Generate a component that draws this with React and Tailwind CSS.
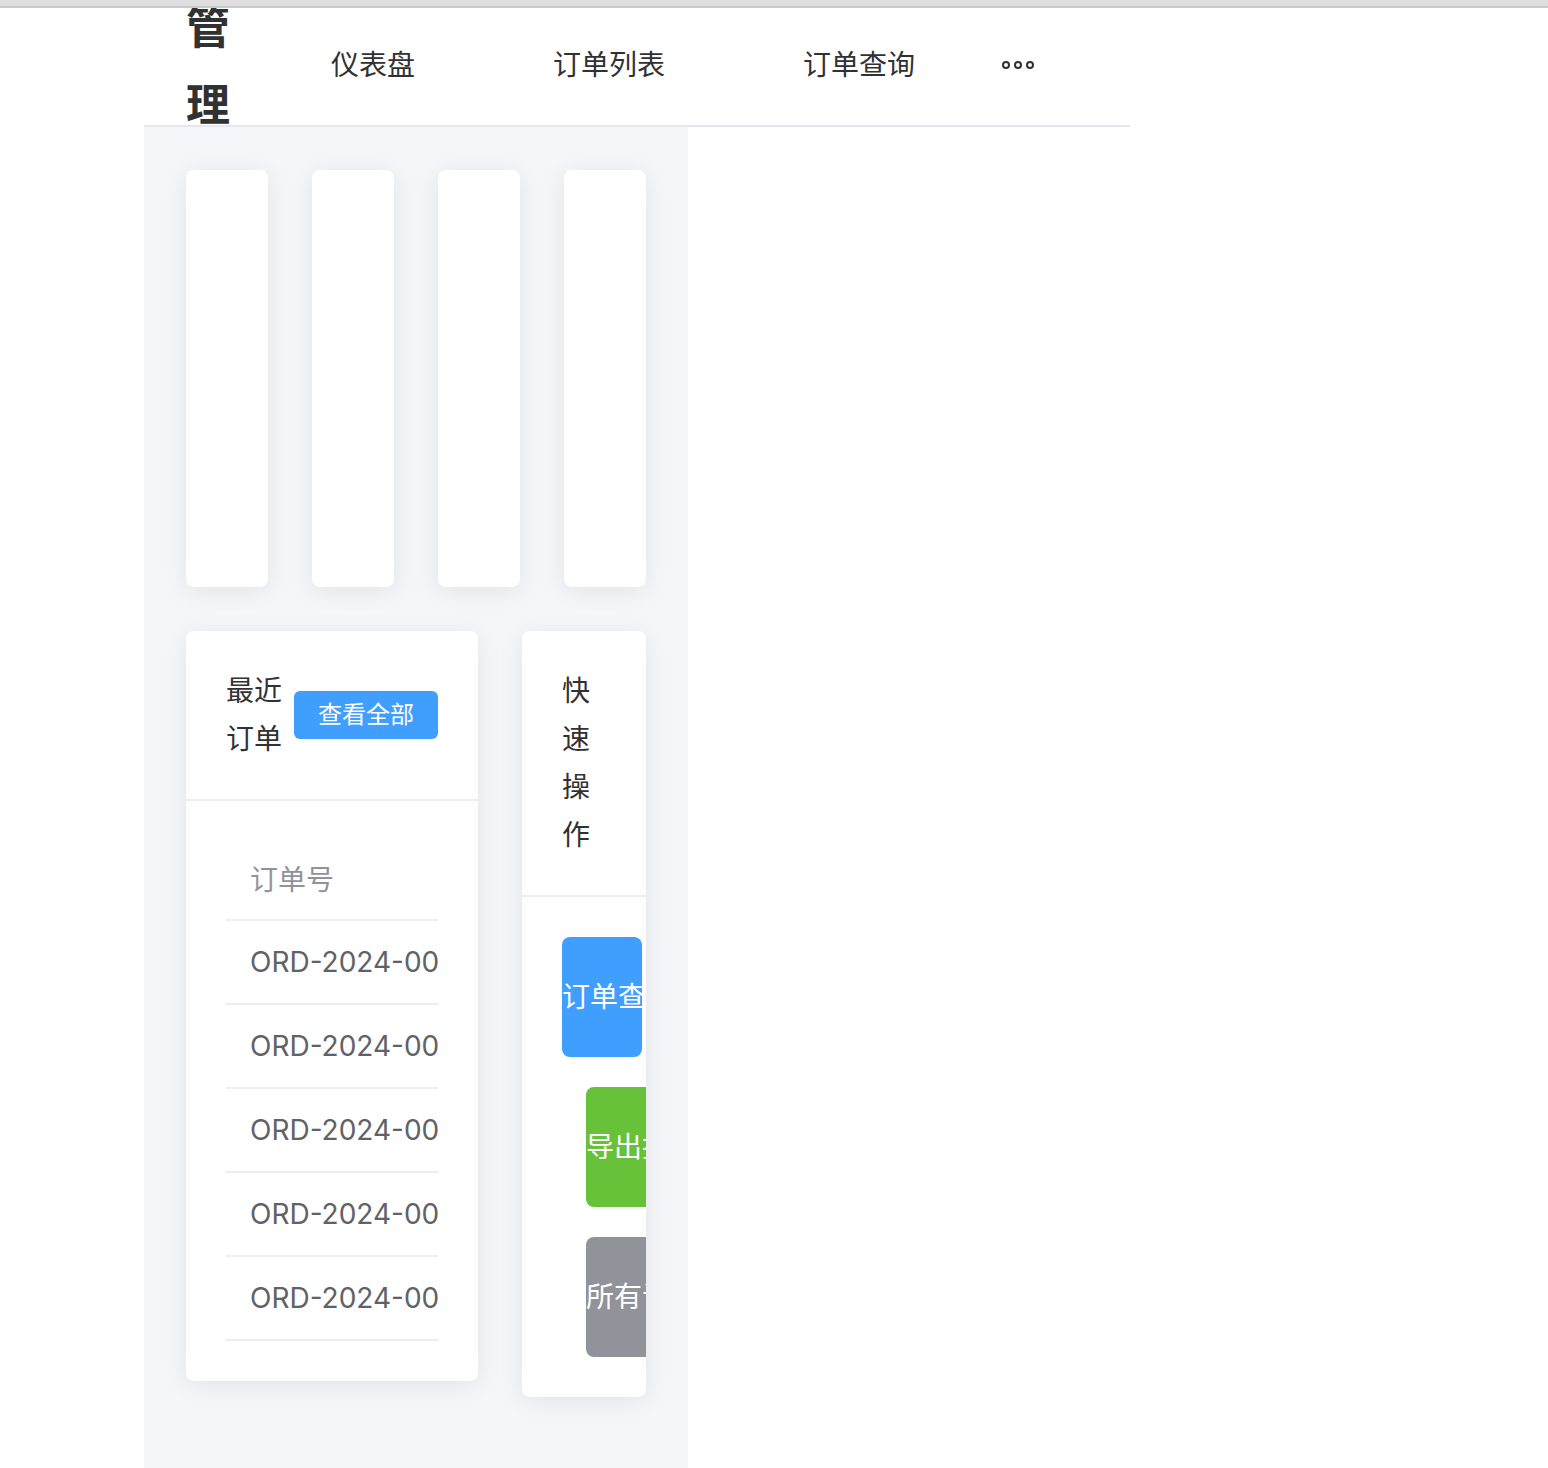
import React from "react";

const font = { fontFamily: 'Inter, "Noto Sans CJK SC", sans-serif' };

const menu = ["仪表盘", "订单列表", "订单查询"];
const orders = ["ORD-2024-001", "ORD-2024-002", "ORD-2024-003", "ORD-2024-004", "ORD-2024-005"];

function MoreDots() {
  return (
    <svg width="34" height="10" viewBox="0 0 34 10" fill="none" stroke="#303133" strokeWidth="2">
      <circle cx="5" cy="5" r="3" />
      <circle cx="17" cy="5" r="3" />
      <circle cx="29" cy="5" r="3" />
    </svg>
  );
}

function StatCard() {
  return <div className="w-[82px] h-[417px] bg-white rounded-[8px] shadow-[0_4px_24px_rgba(0,0,0,0.08)] overflow-hidden" />;
}

export default function App() {
  return (
    <div className="relative min-h-[1468px] bg-white overflow-hidden" style={font}>
      {/* browser chrome strip lying over the page */}
      <div className="absolute top-0 left-0 w-full h-[8px] bg-[#dfdfdf] border-b-2 border-[#c9c9c9] z-10" />

      <div className="ml-[144px] w-[986px]">
        <header className="flex items-center h-[127px] border-b-2 border-[#e4e7ed] pl-[42px]">
          <h1 className="self-start -mt-[10px] w-[46px] text-[44px] leading-[77px] font-bold text-[#303133]">
            管理
          </h1>
          <nav className="flex items-center h-full ml-[30px] pt-[4px]">
            {menu.map((m) => (
              <div key={m} className="px-[69px] text-[28px] leading-none text-[#303133] whitespace-nowrap">
                {m}
              </div>
            ))}
            <div className="pl-[17px] pr-[20px] flex items-center">
              <MoreDots />
            </div>
          </nav>
        </header>
      </div>

      <main className="ml-[144px] w-[544px] min-h-[1341px] bg-[#f5f6fa] px-[42px] pt-[43px]">
        <div className="flex gap-[44px]">
          <StatCard />
          <StatCard />
          <StatCard />
          <StatCard />
        </div>

        <div className="flex items-start gap-[44px] mt-[44px]">
          {/* recent orders */}
          <div className="w-[292px] bg-white rounded-[8px] shadow-[0_4px_24px_rgba(0,0,0,0.08)] overflow-hidden">
            <div className="flex items-center justify-between px-[40px] py-[36px] border-b-2 border-[#ebeef5]">
              <span className="w-[67px] text-[28px] leading-[48px] text-[#303133]">最近订单</span>
              <button className="w-[144px] h-[48px] shrink-0 rounded-[6px] bg-[#409eff] text-white text-[24px]">
                查看全部
              </button>
            </div>
            <div className="p-[40px]">
              <div className="w-[212px] overflow-hidden">
                <div className="h-[80px] flex items-center pl-[24px] border-b-2 border-[#ebeef5] text-[28px] text-[#909399] whitespace-nowrap">
                  订单号
                </div>
                {orders.map((o) => (
                  <div key={o} className="h-[84px] flex items-center pl-[24px] border-b-2 border-[#ebeef5] text-[28px] text-[#606266] whitespace-nowrap">
                    {o}
                  </div>
                ))}
              </div>
            </div>
          </div>

          {/* quick actions */}
          <div className="w-[124px] bg-white rounded-[8px] shadow-[0_4px_24px_rgba(0,0,0,0.08)] overflow-hidden">
            <div className="px-[40px] py-[36px] border-b-2 border-[#ebeef5]">
              <span className="block w-[44px] text-[28px] leading-[48px] text-[#303133]">快速操作</span>
            </div>
            <div className="p-[40px] flex flex-col gap-[30px]">
              <button className="w-[80px] h-[120px] shrink-0 rounded-[8px] bg-[#409eff] text-white text-[28px] text-left overflow-hidden whitespace-nowrap">
                订单查询
              </button>
              <button className="ml-[24px] w-[80px] h-[120px] shrink-0 rounded-[8px] bg-[#67c23a] text-white text-[28px] text-left overflow-hidden whitespace-nowrap">
                导出报表
              </button>
              <button className="ml-[24px] w-[80px] h-[120px] shrink-0 rounded-[8px] bg-[#909399] text-white text-[28px] text-left overflow-hidden whitespace-nowrap">
                所有订单
              </button>
            </div>
          </div>
        </div>
      </main>
    </div>
  );
}
